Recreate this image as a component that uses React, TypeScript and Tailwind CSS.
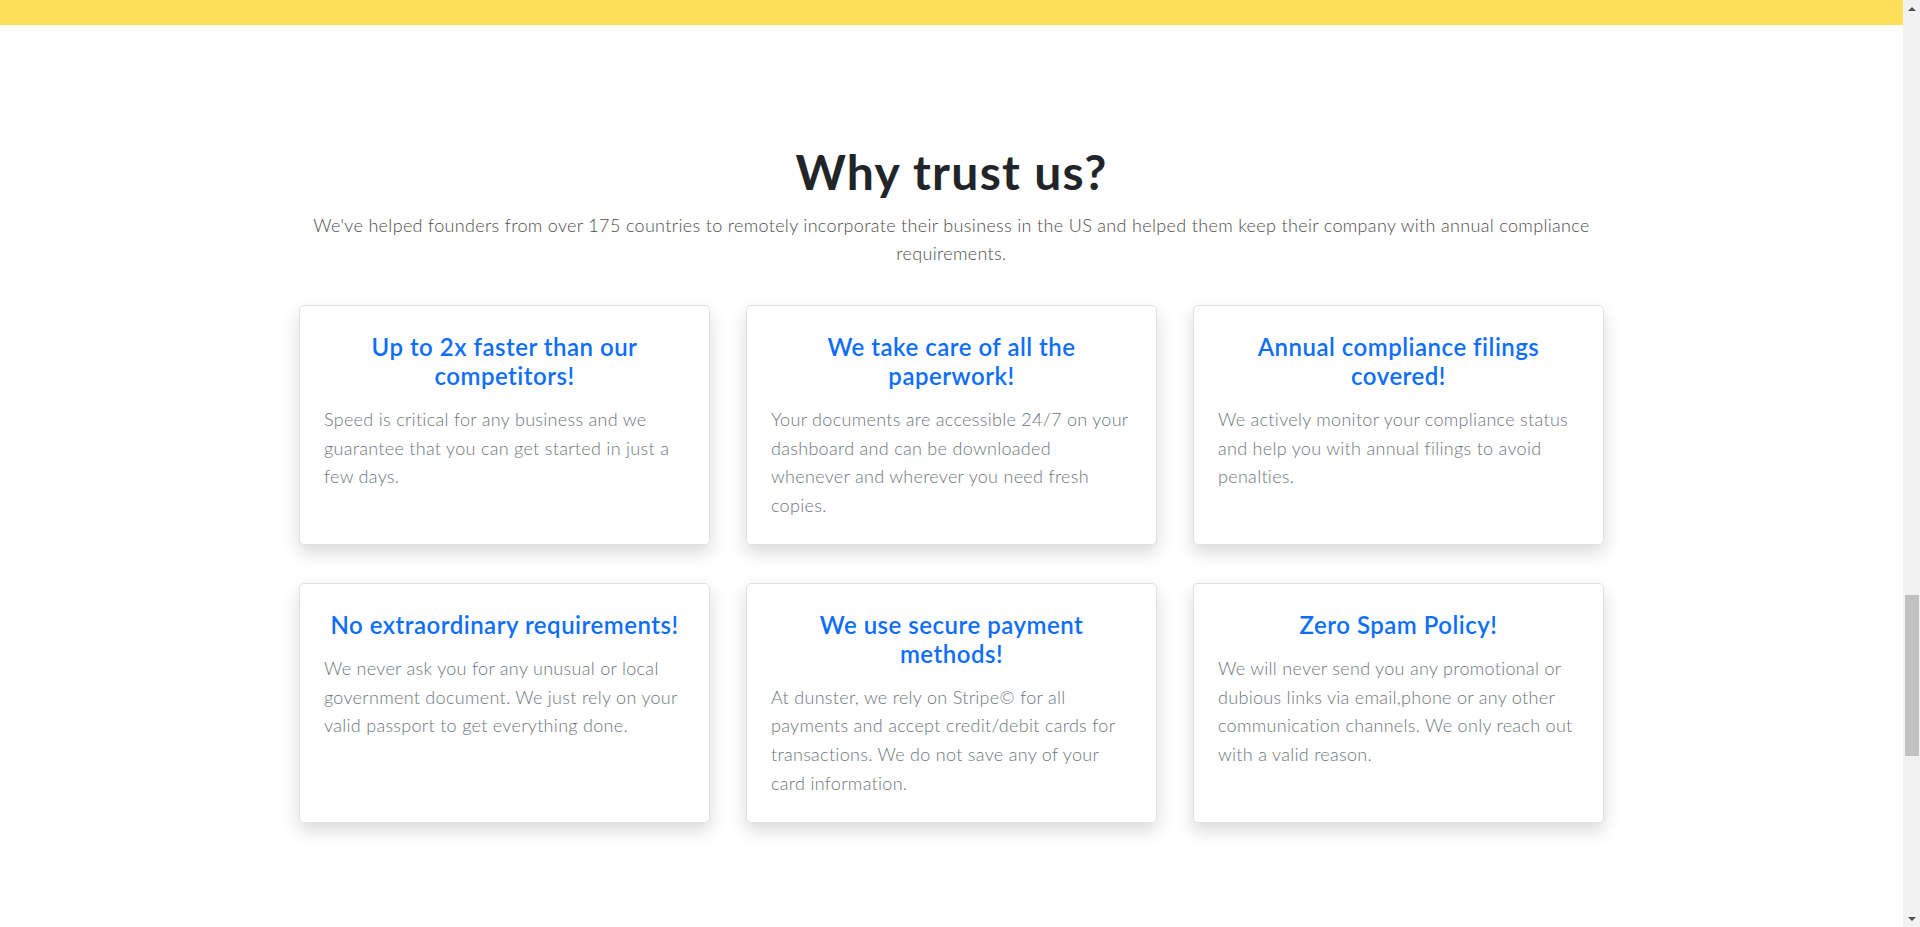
import React from 'react';

const features = [
  {
    title: 'Up to 2x faster than our competitors!',
    body: 'Speed is critical for any business and we guarantee that you can get started in just a few days.',
  },
  {
    title: 'We take care of all the paperwork!',
    body: 'Your documents are accessible 24/7 on your dashboard and can be downloaded whenever and wherever you need fresh copies.',
  },
  {
    title: 'Annual compliance filings covered!',
    body: 'We actively monitor your compliance status and help you with annual filings to avoid penalties.',
  },
  {
    title: 'No extraordinary requirements!',
    body: 'We never ask you for any unusual or local government document. We just rely on your valid passport to get everything done.',
  },
  {
    title: 'We use secure payment methods!',
    body: 'At dunster, we rely on Stripe© for all payments and accept credit/debit cards for transactions. We do not save any of your card information.',
  },
  {
    title: 'Zero Spam Policy!',
    body: 'We will never send you any promotional or dubious links via email,phone or any other communication channels. We only reach out with a valid reason.',
  },
];

function FeatureCard({ title, body }: { title: string; body: string }) {
  return (
    <div className="rounded-[5px] border border-[#dee2e6] bg-white px-6 pt-[27px] pb-6 shadow-[0_8px_18px_rgba(0,0,0,0.15)]">
      <h4 className="mb-[14px] text-center text-[24px] font-semibold leading-[1.2] tracking-[0.5px] text-[#0d6efd]">
        {title}
      </h4>
      <p className="text-[18px] font-light leading-[1.6] tracking-[0.3px] text-[#6c757d]">{body}</p>
    </div>
  );
}

// Classic scrollbar drawn as a column beside the page
function Scrollbar() {
  return (
    <div className="flex w-[17px] shrink-0 flex-col items-center bg-[#f1f1f1]">
      <div className="flex h-[17px] w-full items-center justify-center">
        <div className="h-0 w-0 border-x-[4px] border-b-[4px] border-x-transparent border-b-[#505050]" />
      </div>
      <div className="mt-[578px] ml-[1px] h-[161px] w-[14px] bg-[#c1c1c1]" />
      <div className="mt-auto flex h-[17px] w-full items-center justify-center">
        <div className="h-0 w-0 border-x-[4px] border-t-[4px] border-x-transparent border-t-[#505050]" />
      </div>
    </div>
  );
}

export default function App() {
  return (
    <div className="flex h-[927px] overflow-hidden bg-white font-['Lato',_sans-serif] text-[#212529]">
      <div className="flex-1">
        <div className="h-[25px] bg-[#ffde59]" />

        <section className="pt-[118px]">
          <div className="mx-auto w-[1305px]">
            <h2 className="mb-[10px] text-center text-[48px] font-bold leading-[1.2] tracking-[1.3px] text-[#212529]">
              Why trust us?
            </h2>
            <p className="text-center text-[18px] font-light leading-[1.6] tracking-[0.33px] text-[#4d4d4d]">
              We've helped founders from over 175 countries to remotely incorporate their business in the US and
              helped them keep their company with annual compliance requirements.
            </p>

            <div className="mt-[37px] grid grid-cols-3 gap-x-[36px] gap-y-[38px]">
              {features.map((f) => (
                <FeatureCard key={f.title} title={f.title} body={f.body} />
              ))}
            </div>
          </div>
        </section>
      </div>
      <Scrollbar />
    </div>
  );
}
